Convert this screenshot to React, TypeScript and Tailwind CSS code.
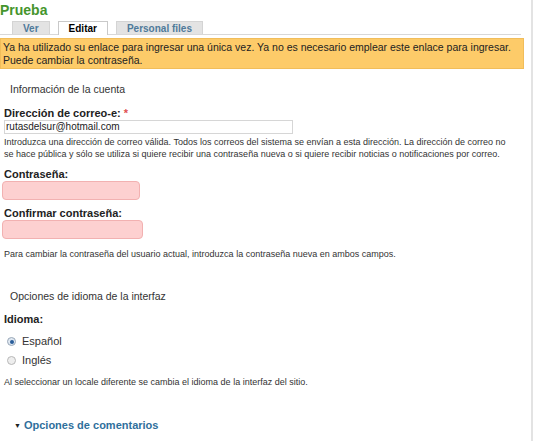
import React from 'react';

const font = { fontFamily: '"Liberation Sans", Arial, sans-serif' };

function Tab({ label, active }: { label: string; active?: boolean }) {
  return (
    <div
      className={
        active
          ? 'h-[14px] px-[10px] border border-b-0 border-[#c9c9c9] bg-white text-black font-bold text-[10px] leading-[13px] -mb-px relative'
          : 'h-[13px] px-[10px] border border-b-0 border-[#d4d4d4] bg-[#e3e3e3] text-[#4f7a9a] font-bold text-[10px] leading-[13px]'
      }
    >
      {label}
    </div>
  );
}

function Radio({ label, checked }: { label: string; checked?: boolean }) {
  return (
    <label className="h-[13px] flex items-center gap-[6px] text-[11px] leading-[13px] text-[#333]">
      <span
        className={
          checked
            ? 'w-[9px] h-[9px] rounded-full border border-[#9aa8b8] bg-[#dfe8f2] grid place-items-center'
            : 'w-[9px] h-[9px] rounded-full border border-[#b8b8b8] bg-[#eeeeee]'
        }
      >
        {checked && <span className="w-[4px] h-[4px] rounded-full bg-[#2a5d9a]" />}
      </span>
      {label}
    </label>
  );
}

export default function App() {
  return (
    <div className="flex h-[441px] overflow-hidden bg-white text-[#222]" style={font}>
      <div className="w-[524px]">
        <h1 className="text-[14px] font-bold text-[#45952d] leading-[18px] pt-[1px]">Prueba</h1>

        <div className="mt-[2px] mr-[3px] flex gap-[8px] pl-[12px] items-end border-b border-[#d8d8d8]">
          <Tab label="Ver" />
          <Tab label="Editar" active />
          <Tab label="Personal files" />
        </div>

        <div className="mt-[3px] bg-[#fdcb69] border border-[#f1bd5a] px-[2px] pt-[2px] pb-[1px] text-[10.5px] leading-[13px] text-[#222]">
          Ya ha utilizado su enlace para ingresar una única vez. Ya no es necesario emplear este enlace para ingresar.
          <br />
          Puede cambiar la contraseña.
        </div>

        <div className="pl-[10px] mt-[14px] text-[10.5px] leading-[13px] text-[#333]">Información de la cuenta</div>

        <div className="pl-[4px] mt-[11px]">
          <div className="text-[11px] font-bold leading-[13px]">
            Dirección de correo-e: <span className="text-[#e05050]">*</span>
          </div>
          <div className="w-[289px] h-[14px] border border-[#d6d6d6] text-[10px] leading-[12px] px-[1px] text-[#222]">
            rutasdelsur@hotmail.com
          </div>
          <p className="mt-[2px] text-[9px] leading-[12px] text-[#333]">
            Introduzca una dirección de correo válida. Todos los correos del sistema se envían a esta dirección. La dirección de correo no
            <br />
            se hace pública y sólo se utiliza si quiere recibir una contraseña nueva o si quiere recibir noticias o notificaciones por correo.
          </p>
        </div>

        <div className="pl-[2px] mt-[8px]">
          <div className="pl-[2px] text-[11px] font-bold leading-[13px]">Contraseña:</div>
          <div className="w-[138px] h-[19px] rounded-[4px] bg-[#fdd0d0] border border-[#f2b1b1]" />
          <div className="pl-[2px] mt-[7px] text-[11px] font-bold leading-[13px]">Confirmar contraseña:</div>
          <div className="w-[141px] h-[19px] rounded-[4px] bg-[#fdd0d0] border border-[#f2b1b1]" />
          <p className="pl-[2px] mt-[9px] text-[9px] leading-[12px] text-[#333]">
            Para cambiar la contraseña del usuario actual, introduzca la contraseña nueva en ambos campos.
          </p>
        </div>

        <div className="pl-[10px] mt-[30px] text-[10.5px] leading-[13px] text-[#333]">Opciones de idioma de la interfaz</div>

        <div className="pl-[4px] mt-[10px]">
          <div className="text-[11px] font-bold leading-[13px]">Idioma:</div>
          <div className="mt-[9px] pl-[3px] flex flex-col gap-[6px]">
            <Radio label="Español" checked />
            <Radio label="Inglés" />
          </div>
          <p className="mt-[9px] text-[9px] leading-[12px] text-[#333]">
            Al seleccionar un locale diferente se cambia el idioma de la interfaz del sitio.
          </p>
        </div>

        <div className="pl-[14px] mt-[31px] flex items-center gap-[3px] text-[11px] leading-[13px] font-bold text-[#2f6f9c]">
          <span className="text-[7px] text-[#222]">▼</span>
          Opciones de comentarios
        </div>
      </div>
      <div className="ml-[7px] w-[2px] bg-[#e3e3e3]" />
    </div>
  );
}
